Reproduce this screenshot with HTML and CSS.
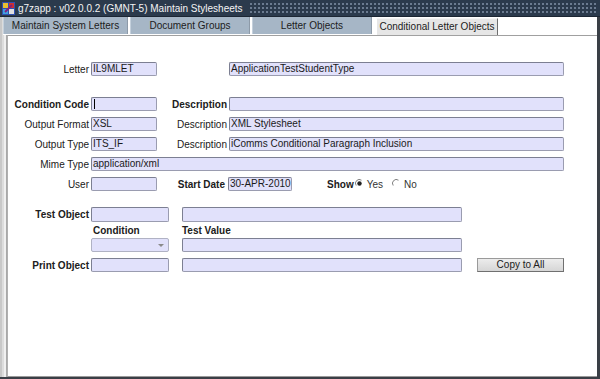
FILE: index.html
```html
<!DOCTYPE html>
<html>
<head>
<meta charset="utf-8">
<link rel="stylesheet" href="styles.css">
</head>
<body>
<div class="window">
  <div class="titlebar">
    <svg class="appicon" width="13" height="13" viewBox="0 0 13 13">
      <rect x="0" y="0" width="13" height="13" fill="#3050b0"/>
      <rect x="1" y="1" width="5" height="5" fill="#e8c030"/>
      <rect x="7" y="1" width="5" height="5" fill="#d03030"/>
      <rect x="1" y="7" width="5" height="5" fill="#40a0e0"/>
      <rect x="7" y="7" width="5" height="5" fill="#e0e0e0"/>
      <path d="M3 10 L10 3" stroke="#802080" stroke-width="2"/>
    </svg>
    <span class="title">g7zapp : v02.0.0.2 (GMNT-5) Maintain Stylesheets</span>
    <span class="dots"></span>
  </div>
  <div class="body">
    <div class="leftframe"></div>
    <div class="main">
      <div class="tabs">
        <div class="tab">Maintain System Letters</div>
        <div class="tab">Document Groups</div>
        <div class="tab">Letter Objects</div>
        <div class="tab active">Conditional Letter Objects</div>
      </div>
      <div class="panel">
        <div class="row r1">
          <label class="lbl">Letter</label>
          <div class="in w66">IL9MLET</div>
          <div class="in wdesc ml72">ApplicationTestStudentType</div>
        </div>
        <div class="row r2">
          <label class="lbl b">Condition Code</label>
          <div class="in w66 caret"></div>
          <label class="lbl2 b">Description</label>
          <div class="in wdesc"></div>
        </div>
        <div class="row r3">
          <label class="lbl">Output Format</label>
          <div class="in w66">XSL</div>
          <label class="lbl2">Description</label>
          <div class="in wdesc">XML Stylesheet</div>
        </div>
        <div class="row r3">
          <label class="lbl">Output Type</label>
          <div class="in w66">ITS_IF</div>
          <label class="lbl2">Description</label>
          <div class="in wdesc">iComms Conditional Paragraph Inclusion</div>
        </div>
        <div class="row r3">
          <label class="lbl">Mime Type</label>
          <div class="in wmime">application/xml</div>
        </div>
        <div class="row r3">
          <label class="lbl">User</label>
          <div class="in w66"></div>
          <label class="lbl3 b">Start Date</label>
          <div class="in wdate">30-APR-2010</div>
          <label class="show b">Show</label>
          <svg class="radio" width="9" height="9" viewBox="0 0 9 9"><path d="M1.2 6.5 A3.8 3.8 0 0 1 6.5 1.2" stroke="#808080" fill="none"/><circle cx="4.5" cy="4.5" r="2.2" fill="#222"/></svg>
          <span class="opt">Yes</span>
          <svg class="radio r2nd" width="9" height="9" viewBox="0 0 9 9"><path d="M1.2 6.5 A3.8 3.8 0 0 1 6.5 1.2" stroke="#808080" fill="none"/></svg>
          <span class="opt">No</span>
        </div>
        <div class="row r7">
          <label class="lbl b">Test Object</label>
          <div class="in w78"></div>
          <div class="in wtest ml13"></div>
        </div>
        <div class="hrow">
          <span class="h1 b">Condition</span>
          <span class="h2 b">Test Value</span>
        </div>
        <div class="row r8">
          <div class="sel w78"><span class="arrow"></span></div>
          <div class="in wtest ml13"></div>
        </div>
        <div class="row r3">
          <label class="lbl b">Print Object</label>
          <div class="in w78"></div>
          <div class="in wtest ml13"></div>
          <div class="btn">Copy to All</div>
        </div>
      </div>
    </div>
  </div>
</div>
</body>
</html>
```
FILE: styles.css
```css
* { box-sizing: border-box; }
html, body { margin: 0; padding: 0; }
body {
  width: 600px;
  height: 379px;
  overflow: hidden;
  font-family: "Liberation Sans", Arial, sans-serif;
  font-size: 10px;
  color: #202020;
  background: #ffffff;
}
.window {
  width: 600px;
  height: 379px;
  display: flex;
  flex-direction: column;
  background: #ffffff;
  border-bottom: 2px solid #3a3f46;
}
.titlebar {
  height: 17px;
  background: #2b3a4c;
  display: flex;
  align-items: center;
  padding-left: 2px;
  border-bottom: 1px solid #1c2633;
}
.appicon { flex: none; margin-right: 3px; }
.title {
  color: #f4f4f4;
  font-size: 10px;
  white-space: nowrap;
  margin-right: 6px;
}
.dots {
  flex: 1;
  height: 12px;
  margin-right: 4px;
  background-image: radial-gradient(circle, #6b7b90 0.8px, transparent 1px);
  background-size: 4px 4px;
}
.body {
  flex: 1;
  display: flex;
}
.leftframe {
  width: 7px;
  background: #dcdcdc;
  border-left: 2px solid #c8c8c8;
  border-right: 1px solid #a8a8a8;
  box-shadow: inset -2px 0 0 #f0f0f0;
}
.main {
  flex: 1;
  display: flex;
  flex-direction: column;
  border-right: 3px solid #3a3f46;
}
.tabs {
  height: 18px;
  display: flex;
  margin-left: -4px;
  background: #ffffff;
}
.tab {
  height: 17px;
  margin-top: 0;
  width: 125px;
  margin-right: 2px;
  background: #a6b6c6;
  text-align: center;
  line-height: 17px;
  color: #1c1c1c;
  border-right: 1px solid #8d9aa8;
  border-left: 1px solid #c4d0dc;
  white-space: nowrap;
}
.tab:nth-child(2), .tab:nth-child(3) { width: 120px; }
.tab.active {
  width: 122px;
  margin-left: 2px;
  margin-top: 1px;
  background: #e6e6e6;
  border-left: 1px solid #ffffff;
  border-right: 1px solid #6e6e6e;
  border-top: 1px solid #f4f4f4;
  line-height: 15px;
}
.panel {
  flex: 1;
  border-top: 1px solid #a0a0a0;
  border-left: 1px solid #b0b0b0;
  border-bottom: 1px solid #9a9a9a;
  background: #ffffff;
  display: flex;
  flex-direction: column;
}
.row {
  display: flex;
  align-items: center;
  height: 14px;
}
.r1 { margin-top: 26px; }
.r2 { margin-top: 21px; }
.r3 { margin-top: 6px; }
.r7 { margin-top: 16px; height: 15px; }
.r8 { margin-top: 1px; }
.lbl {
  width: 81px;
  text-align: right;
  margin-right: 2px;
  white-space: nowrap;
}
.lbl2 {
  width: 70px;
  text-align: right;
  margin-right: 2px;
  white-space: nowrap;
}
.lbl3 {
  width: 68px;
  text-align: right;
  margin-right: 3px;
  white-space: nowrap;
}
.b { font-weight: bold; }
.in, .sel {
  height: 14px;
  background: #e1e1fb;
  border: 1px solid #9a9cb0;
  border-top-color: #7c7f92;
  border-left-color: #7c7f92;
  border-radius: 2px;
  padding: 0 1px;
  line-height: 12px;
  white-space: nowrap;
  overflow: hidden;
  color: #1a1a1a;
}
.r7 .in, .r7 .sel { height: 15px; }
.caret { position: relative; }
.caret::before {
  content: "";
  position: absolute;
  left: 2px;
  top: 1px;
  width: 1px;
  height: 10px;
  background: #000;
}
.w66 { width: 66px; }
.w78 { width: 78px; }
.wdesc { width: 335px; }
.wmime { width: 473px; }
.wdate { width: 64px; }
.wtest { width: 280px; }
.ml72 { margin-left: 72px; }
.ml13 { margin-left: 13px; }
.show { margin-left: 35px; margin-right: 1px; }
.radio { flex: none; margin-top: -2px; }
.opt { margin-left: 3px; color: #333; }
.r2nd { margin-left: 9px; }
.hrow {
  display: flex;
  height: 15px;
  align-items: center;
  padding-top: 1px;
}
.h1 { margin-left: 85px; width: 89px; }
.sel {
  margin-left: 83px;
  position: relative;
  background: #e1e1fb;
  border-color: #b0b2c4;
}
.arrow {
  position: absolute;
  right: 4px;
  top: 5px;
  width: 0;
  height: 0;
  border-left: 3px solid transparent;
  border-right: 3px solid transparent;
  border-top: 3px solid #8a8a8a;
}
.btn {
  margin-left: 15px;
  width: 87px;
  height: 14px;
  background: linear-gradient(#ececec, #d6d6d6);
  border: 1px solid #9a9a9a;
  border-right-color: #707070;
  border-bottom-color: #707070;
  text-align: center;
  line-height: 12px;
  color: #202020;
}
```
